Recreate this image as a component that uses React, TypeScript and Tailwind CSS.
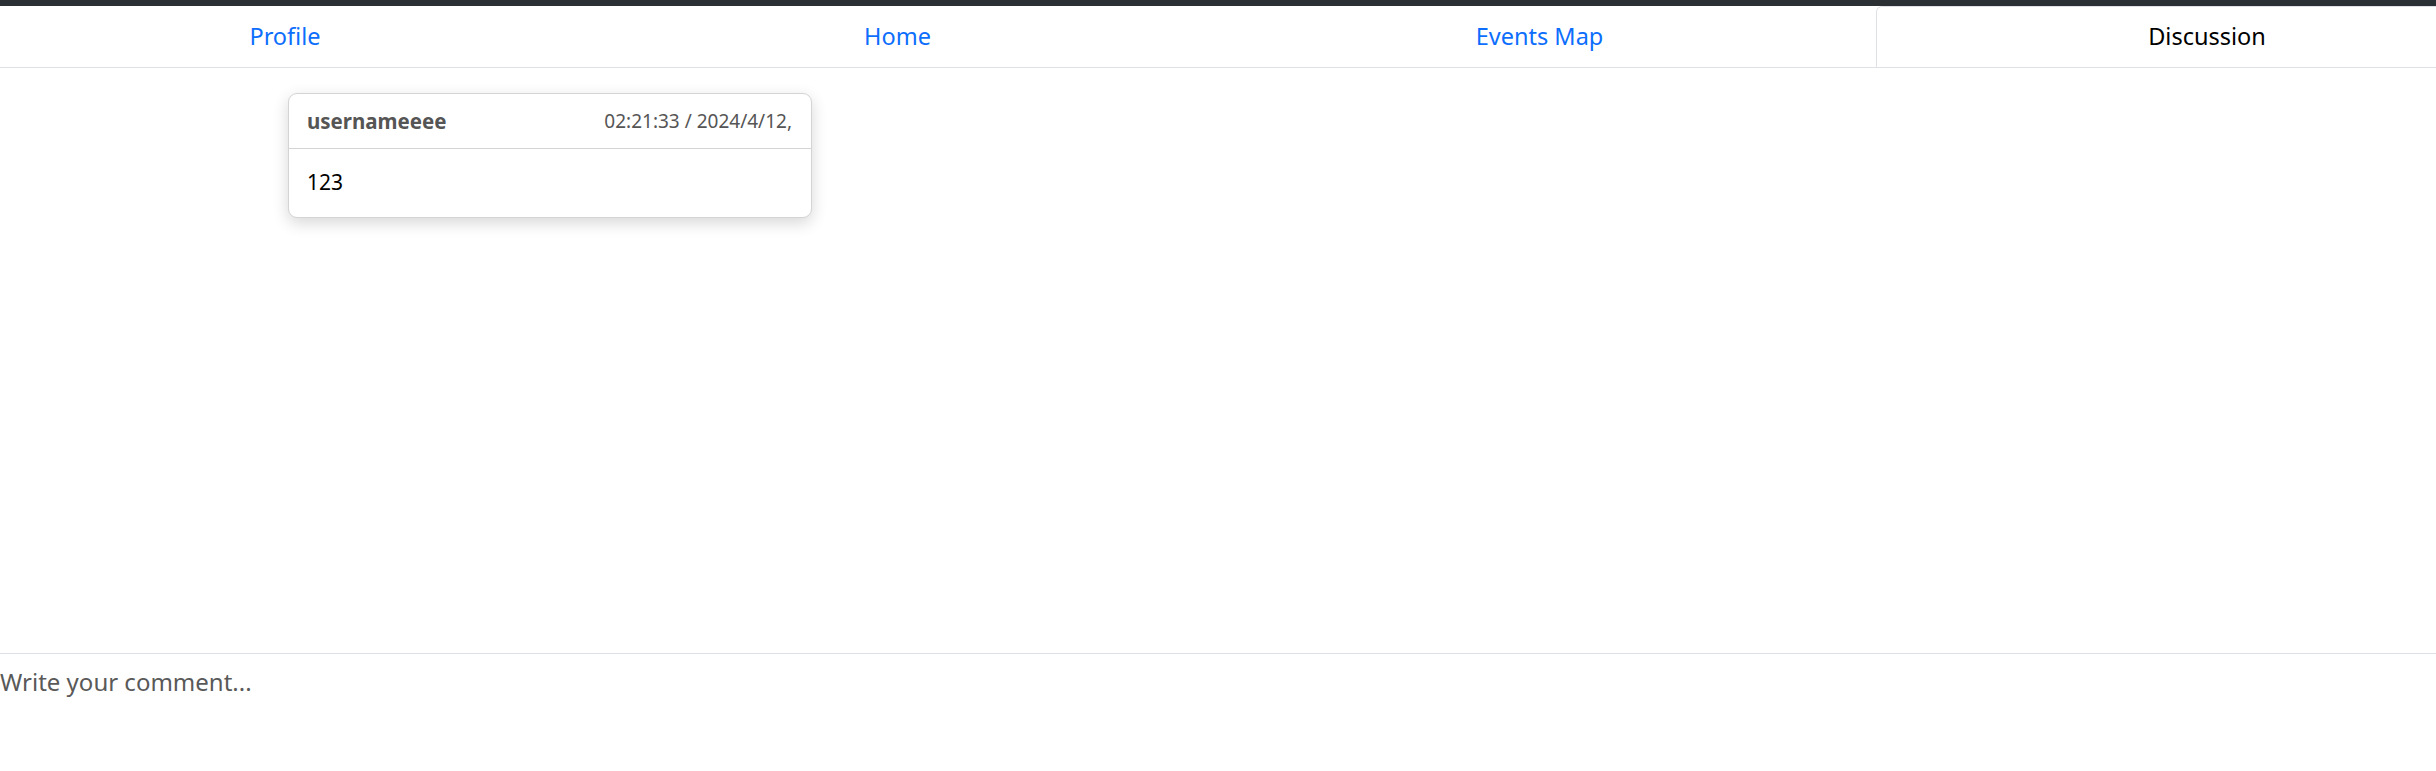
import React from 'react';

const font = { fontFamily: '"Noto Sans", "Open Sans", sans-serif' };

type Tab = { label: string; width: string; active?: boolean };

const tabs: Tab[] = [
  { label: 'Profile', width: 'w-[614px]' },
  { label: 'Home', width: 'w-[611px]' },
  { label: 'Events Map', width: 'w-[673px]' },
  { label: 'Discussion', width: 'w-[662px]', active: true },
];

function NavTabs() {
  return (
    <div className="overflow-hidden border-b border-[#dee2e6]">
      <ul className="flex w-[2560px] -ml-[22px] -mb-px">
        {tabs.map((t) =>
          t.active ? (
            <li
              key={t.label}
              className={`${t.width} h-[62px] flex items-center justify-center bg-white border border-[#dee2e6] border-b-white rounded-tl-[6px] text-[23.5px] text-black`}
            >
              {t.label}
            </li>
          ) : (
            <li
              key={t.label}
              className={`${t.width} h-[62px] flex items-center justify-center text-[23.5px] text-[#0d6efd]`}
            >
              {t.label}
            </li>
          )
        )}
      </ul>
    </div>
  );
}

function CommentCard() {
  return (
    <div className="w-[524px] bg-white border border-[#d4d4d4] rounded-[9px] shadow-[0_5px_16px_rgba(0,0,0,0.16)]">
      <div className="h-[55px] flex items-center justify-between pl-[18px] pr-[19px] border-b border-[#d4d4d4]">
        <span className="text-[20.5px] font-bold text-[#555]">usernameeee</span>
        <span className="text-[19px] text-[#555]">02:21:33 / 2024/4/12,</span>
      </div>
      <div className="h-[68px] flex items-center pl-[18px] text-[21px] text-black">123</div>
    </div>
  );
}

export default function App() {
  return (
    <div className="h-screen flex flex-col bg-white" style={font}>
      <div className="h-[6px] bg-[#2b3035]" />
      <NavTabs />
      <main className="flex-1 pl-[288px] pt-[25px]">
        <CommentCard />
      </main>
      <div className="h-[118px] border-t border-[#dee2e6]">
        <textarea
          className="w-full h-full resize-none outline-none pt-[10px] text-[24px] leading-[36px] text-[#333] placeholder:text-[#595959]"
          placeholder="Write your comment..."
        />
      </div>
    </div>
  );
}
